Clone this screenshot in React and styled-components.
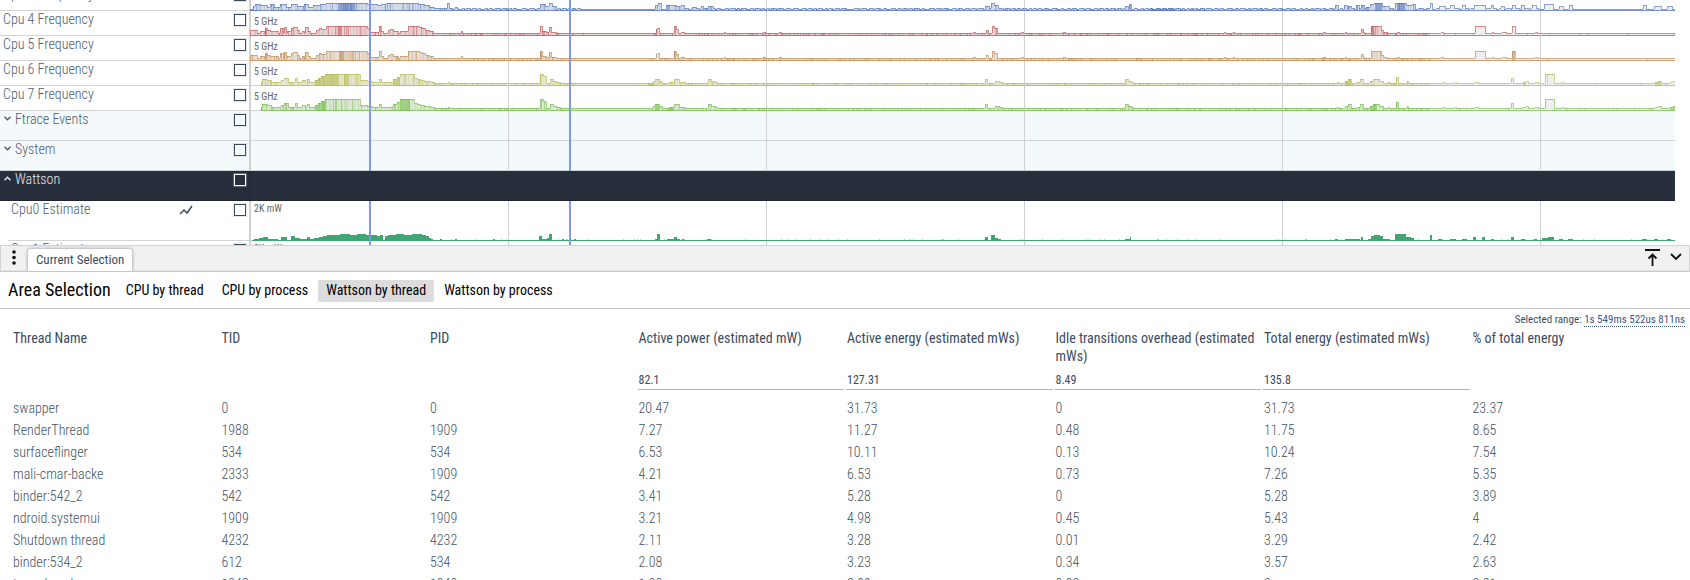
import React from 'react';
import styled, { createGlobalStyle } from 'styled-components';

const GlobalStyle = createGlobalStyle`
  * { box-sizing: border-box; }
  html, body, #root { height: 100%; }
  body {
    margin: 0;
    background: #fff;
    color: #3c4b5d;
    font-family: "Roboto Condensed", Roboto, sans-serif;
    font-size: 14px;
    overflow: hidden;
  }
`;

const SPAN = 1425;
const GRID = [0, 258, 516, 774, 1032, 1290];
const SELECTION = [119, 319];

/* Every step is [start, end, height]; outside the steps the trace rests on its base. */
const BIG_CORE = [
  [0, 7, 6], [10, 14, 5], [15, 17, 10], [17, 20, 6], [20, 28, 5], [30, 33, 8], [34, 36, 9], [37, 41, 5],
  [41, 43, 8], [43, 47, 9], [47, 49, 6], [52, 54, 5], [55, 58, 9], [58, 60, 5], [66, 69, 6], [69, 71, 8],
  [71, 76, 7], [76, 117, 10], [117, 119, 8], [119, 129, 4], [129, 131, 10], [131, 133, 5], [138, 140, 6],
  [140, 143, 7], [143, 148, 5], [150, 158, 5], [158, 169, 10], [169, 172, 9], [172, 175, 8], [175, 179, 6],
  [179, 183, 5], [211, 212, 5], [290, 292, 10], [292, 296, 5], [296, 299, 4], [299, 301, 9], [301, 306, 4],
  [406, 407, 7], [407, 409, 8], [424, 426, 10], [426, 428, 7], [431, 434, 4], [474, 475, 4], [513, 515, 4],
  [529, 531, 4], [723, 725, 4], [736, 738, 6], [742, 744, 10], [744, 747, 8], [771, 773, 4], [813, 815, 4],
  [974, 975, 4], [983, 984, 4], [1073, 1075, 4], [1095, 1096, 4], [1112, 1114, 4], [1111, 1113, 7],
  [1121, 1131, 10], [1131, 1133, 6], [1133, 1137, 4], [1147, 1149, 4], [1191, 1193, 4], [1225, 1235, 10],
  [1242, 1243, 4], [1252, 1256, 4], [1262, 1265, 10], [1285, 1287, 4],
];

const PRIME_CORE = [
  [11, 12, 4], [12, 17, 7], [17, 21, 6], [21, 31, 4], [31, 34, 6], [34, 38, 8], [38, 45, 4], [45, 47, 8],
  [47, 52, 4], [52, 55, 6], [55, 57, 5], [57, 59, 7], [59, 65, 4], [65, 68, 6], [68, 71, 8], [71, 75, 10],
  [75, 110, 12], [110, 117, 6], [117, 122, 5], [122, 129, 4], [129, 131, 7], [131, 143, 4], [143, 147, 7],
  [147, 150, 9], [150, 164, 12], [164, 167, 8], [167, 170, 7], [170, 174, 6], [174, 180, 5], [180, 184, 4],
  [198, 199, 4], [290, 293, 12], [293, 296, 10], [300, 303, 7], [303, 306, 5], [306, 310, 4], [403, 405, 5],
  [405, 409, 7], [410, 412, 5], [419, 424, 4], [424, 429, 7], [430, 435, 4], [458, 461, 7], [461, 465, 5],
  [465, 467, 4], [735, 737, 7], [745, 749, 5], [749, 752, 4], [875, 878, 7], [878, 881, 5], [881, 883, 4],
  [1087, 1088, 4], [1095, 1098, 5], [1098, 1101, 7], [1107, 1110, 4], [1110, 1113, 7], [1120, 1123, 5],
  [1123, 1129, 7], [1129, 1133, 5], [1138, 1139, 4], [1146, 1148, 9], [1157, 1158, 5], [1193, 1194, 4],
  [1205, 1206, 4], [1225, 1228, 4], [1261, 1263, 8], [1273, 1276, 4], [1276, 1278, 5], [1285, 1288, 4],
  [1295, 1304, 12], [1312, 1313, 4], [1405, 1408, 4], [1408, 1411, 5], [1420, 1423, 4], [1423, 1425, 5],
];

const LITTLE_CORE = [
  [3, 5, 5], [5, 10, 7], [10, 17, 6], [17, 20, 4], [20, 24, 7], [24, 30, 4], [30, 36, 7], [36, 41, 4],
  [41, 47, 7], [47, 54, 5], [54, 58, 7], [58, 63, 4], [63, 70, 6], [70, 76, 7], [76, 117, 8], [117, 127, 7],
  [127, 131, 6], [131, 136, 7], [136, 168, 8], [168, 174, 7], [174, 179, 6], [179, 184, 4], [184, 190, 3],
  [197, 199, 8], [205, 207, 4], [290, 295, 7], [295, 299, 5], [299, 302, 8], [302, 306, 5], [405, 408, 6],
  [408, 411, 8], [416, 426, 6], [426, 431, 5], [431, 434, 6], [442, 446, 4], [451, 453, 5], [458, 463, 5],
  [735, 739, 5], [741, 744, 8], [744, 748, 6], [875, 878, 5], [879, 881, 7], [1085, 1088, 6],
  [1094, 1097, 6], [1098, 1101, 5], [1106, 1109, 6], [1111, 1114, 6], [1116, 1120, 4], [1120, 1124, 7],
  [1124, 1132, 8], [1132, 1139, 5], [1145, 1156, 8], [1156, 1162, 6], [1162, 1165, 7], [1180, 1182, 8],
  [1189, 1195, 5], [1200, 1204, 6], [1212, 1215, 6], [1224, 1235, 6], [1241, 1243, 6], [1251, 1254, 5],
  [1262, 1265, 6], [1271, 1274, 6], [1282, 1286, 6], [1294, 1303, 7], [1309, 1313, 5], [1319, 1322, 6],
  [1393, 1396, 6], [1404, 1411, 5], [1417, 1422, 5],
];

const POWER = [
  [4, 9, 2], [9, 13, 3], [13, 18, 4], [18, 24, 2], [24, 28, 2], [31, 37, 4], [41, 45, 5], [45, 50, 3],
  [50, 57, 2], [57, 60, 4], [60, 64, 2], [64, 69, 3], [69, 73, 4], [73, 77, 5], [77, 90, 6], [90, 100, 7],
  [100, 107, 6], [107, 116, 7], [116, 127, 6], [127, 130, 5], [130, 133, 6], [135, 138, 5], [138, 146, 6],
  [146, 154, 7], [154, 162, 6], [162, 172, 7], [172, 176, 6], [176, 179, 5], [179, 181, 3], [181, 183, 2],
  [190, 192, 2], [205, 207, 2], [243, 245, 2], [289, 292, 5], [292, 297, 2], [297, 299, 3], [299, 302, 7],
  [312, 314, 2], [324, 326, 2], [405, 407, 2], [407, 410, 7], [417, 430, 2], [424, 427, 4], [432, 434, 2],
  [457, 461, 2], [735, 738, 4], [741, 745, 6], [745, 748, 3], [748, 751, 2], [875, 881, 2], [880, 881, 4],
  [1085, 1088, 2], [1095, 1110, 2], [1111, 1113, 4], [1118, 1121, 2], [1121, 1124, 5], [1124, 1130, 6],
  [1130, 1133, 5], [1133, 1140, 2], [1145, 1156, 7], [1156, 1161, 4], [1161, 1164, 3], [1180, 1182, 6],
  [1188, 1192, 2], [1200, 1206, 2], [1212, 1217, 2], [1223, 1226, 4], [1232, 1235, 4], [1241, 1244, 2],
  [1261, 1264, 4], [1271, 1275, 2], [1284, 1287, 2], [1292, 1298, 3], [1298, 1304, 4], [1309, 1313, 2],
  [1318, 1323, 2], [1392, 1397, 2], [1404, 1408, 2], [1417, 1421, 2],
];

function heights(steps, base, from = 0) {
  const out = new Array(SPAN).fill(base);
  out.fill(0, 0, from);
  steps.forEach(([a, b, h]) => out.fill(h, a, b));
  return out;
}

function random(seed) {
  let s = seed;
  return () => {
    s = (s * 1664525 + 1013904223) % 4294967296;
    return s / 4294967296;
  };
}

function outline(hs, bottom) {
  let d = '';
  let prev = 0;
  hs.forEach((h, x) => {
    if (h !== prev) {
      const top = bottom - Math.max(h, prev);
      d += `M${x} ${top}h1v${Math.abs(h - prev)}h-1z`;
    }
    if (h) d += `M${x} ${bottom - h}h1v1h-1z`;
    prev = h;
  });
  return d;
}

function area(hs, bottom, test = () => true) {
  return hs.map((h, x) => (h && test(x, h) ? `M${x} ${bottom - h}h1v${h}h-1z` : '')).join('');
}

const Drawing = styled.svg`
  display: block;
  width: 100%;
  height: ${(p) => p.$height}px;
`;

function Frequency({ steps, color, base = 3, from, seed, dense = [], busy }) {
  const next = random(seed);
  const hs = heights(steps, base, from);
  if (busy) {
    for (let x = 190; x < 1290; x += 1) {
      if (hs[x] === base && (x < 330 || x > 430) && next() > 0.4) {
        const len = 2 + Math.floor(next() * 4);
        for (let i = x; i < x + len; i += 1) if (hs[i] === base) hs[i] = base + 1;
        x += len + 1;
      }
    }
  }
  const noise = hs.map(() => next());
  const quiet = (x) => (x > 325 && x < 400) || x > 1180;
  const light = (x) => !quiet(x) && noise[x] > 0.5;
  const strong = (x) => (quiet(x) ? noise[x] > 0.98 : noise[x] > 0.85);
  const inDense = (x) => dense.some(([a, b]) => x >= a && x < b);
  return (
    <g fill={color}>
      <path d={area(hs, 25)} fill="#eeeeee" />
      <path d={area(hs, 25, (x) => x < 1180)} opacity="0.15" />
      <path d={area(hs, 25, light)} opacity="0.15" />
      <path d={area(hs, 25, strong)} opacity="0.35" />
      <path d={area(hs, 25, inDense)} opacity="0.5" />
      <path d={outline(hs, 25)} opacity="0.6" />
      <path d={`M${from || 0} 24H${SPAN}v1H${from || 0}z`} opacity="0.7" />
    </g>
  );
}

function Power() {
  const next = random(7);
  const hs = heights(POWER, 1, 2);
  const speckle = hs.map((h) => (h === 1 && next() > 0.93 ? 2 : 0));
  return (
    <g fill="#3fa673">
      <path d={area(hs, 40)} />
      <path d={area(speckle, 40)} opacity="0.45" />
    </g>
  );
}

function Timeline({ height, children }) {
  return (
    <Drawing $height={height} viewBox={`0 0 ${SPAN} ${height}`} preserveAspectRatio="none" aria-hidden="true">
      {GRID.map((x) => <rect key={x} x={x} width="1" height={height} fill="#d0d0d0" />)}
      {children}
      {SELECTION.map((x) => <rect key={x} x={x} width="2" height={height} fill="#8398e6" />)}
    </Drawing>
  );
}

const Page = styled.div`
  display: flex;
  flex-direction: column;
  height: 100%;
`;

const Viewer = styled.main`
  flex: 0 0 245px;
  overflow: hidden;
  padding-right: 15px;
`;

const Tracks = styled.div`
  display: flex;
  flex-direction: column;
  margin-top: -14px;
`;

const TrackRow = styled.section`
  display: flex;
  flex: none;
  height: ${(p) => p.$height}px;
  background: ${(p) => ({ group: '#f4f9fc', open: '#272e3c' }[p.$kind] || '#fff')};
  color: ${(p) => (p.$kind === 'open' ? '#e8eaed' : '#4b5a6c')};
  --line: ${(p) => ({ group: '#cdd4d5', open: '#20242f' }[p.$kind] || '#d4d4d4')};
`;

const TrackHead = styled.div`
  display: flex;
  flex: 0 0 ${(p) => (p.$nested ? 242 : 250)}px;
  margin-left: ${(p) => (p.$nested ? 8 : 0)}px;
  padding: 0 3px;
  border-right: 1px solid var(--line);
  box-shadow: inset 0 -1px var(--line);
`;

const TrackTitle = styled.label`
  flex: 1;
  font-weight: 300;
  line-height: 16px;
`;

const Toggle = styled.button`
  display: flex;
  width: 12px;
  height: 16px;
  padding: 5px 0 0 1px;
  border: 0;
  background: none;
  color: inherit;
`;

const PlotButton = styled(Toggle)`
  width: 16px;
  margin-right: 39px;
  padding: 4px 0 0;
  color: #3c4b5d;
`;

const Check = styled.input`
  appearance: none;
  width: 12px;
  height: 12px;
  margin: 3px 0 0;
  border: 1px solid ${(p) => (p.$light ? '#fff' : '#3c4b5d')};
  box-shadow: 0 0 0 1px ${(p) => (p.$light ? '#ffffff44' : '#3c4b5d22')};
`;

const TrackBody = styled.div`
  position: relative;
  flex: 1;
  box-shadow: inset 0 -1px var(--line);
`;

const Scale = styled.span`
  position: absolute;
  top: ${(p) => (p.$tall ? 1 : 4)}px;
  left: 3px;
  padding: 0 1px;
  background: #ffffffcc;
  color: #666;
  font-size: 10px;
  line-height: 13px;
`;

const Chevron = ({ up }) => (
  <svg width="7" height="5" viewBox="0 0 7 5" fill="none" stroke="currentColor" strokeWidth="1.4" aria-hidden="true">
    <path d={up ? 'M.5 4.2 3.5 1.2 6.5 4.2' : 'M.5 .8 3.5 3.8 6.5 .8'} />
  </svg>
);

function Track({ name, height = 25, kind, nested, scale, children }) {
  const id = name.replace(/\s/g, '-');
  const group = kind === 'group' || kind === 'open';
  return (
    <TrackRow $height={height} $kind={kind}>
      <TrackHead $nested={nested}>
        {group && <Toggle aria-label={`Toggle ${name}`}><Chevron up={kind === 'open'} /></Toggle>}
        <TrackTitle htmlFor={id}>{name}</TrackTitle>
        {nested && (
          <PlotButton aria-label="Chart options">
            <svg width="14" height="10" viewBox="0 0 14 10" fill="none" stroke="currentColor" strokeWidth="1.5" aria-hidden="true">
              <path d="M1 9 5 5l3 3 5-7" />
            </svg>
          </PlotButton>
        )}
        <Check id={id} type="checkbox" $light={kind === 'open'} />
      </TrackHead>
      <TrackBody>
        {kind !== 'open' && <Timeline height={height}>{children}</Timeline>}
        {scale && <Scale $tall={nested}>{scale}</Scale>}
      </TrackBody>
    </TrackRow>
  );
}

const Drawer = styled.section`
  flex: 1;
  min-height: 0;
  overflow: hidden;
  background: #fff;
`;

const TabBar = styled.header`
  display: flex;
  align-items: flex-end;
  height: 27px;
  padding: 0 1px 0 9px;
  border: 1px solid #d2d2d2;
  border-bottom-color: #c8c8c8;
  background: #f1f1f1;
  box-shadow: inset 0 -1px #e4e4e4;
`;

const IconButton = styled.button`
  display: flex;
  align-items: center;
  justify-content: center;
  width: ${(p) => p.$width || 24}px;
  height: 25px;
  padding: ${(p) => p.$lift || 0}px 0;
  padding-top: 0;
  border: 0;
  background: none;
  color: #111;
`;

const Tab = styled.button`
  height: 22px;
  margin: 0 auto 0 10px;
  padding: 0 8px 2px;
  border: 0;
  border-radius: 3px 3px 0 0;
  background: #fff;
  box-shadow: 0 0 3px 1px #00000040;
  clip-path: inset(-4px -4px 0 -4px);
  color: #3c4b5d;
  font: inherit;
  font-size: 13px;
`;

const Heading = styled.div`
  display: flex;
  align-items: center;
  gap: 2px;
  height: 37px;
  padding: 2px 8px 0;
  border-bottom: 1px solid #cacaca;
  color: #000;
`;

const Title = styled.h1`
  margin: 0 5px 0 0;
  padding-bottom: 2px;
  font-size: 18px;
  font-weight: 400;
  line-height: 20px;
`;

const Choice = styled.button`
  height: 22px;
  padding: 0 8px 2px;
  border: 0;
  border-radius: 2px;
  background: ${(p) => (p.$active ? '#dcdcdc' : 'transparent')};
  color: #000;
  font: inherit;
`;

const Range = styled.div`
  height: 14px;
  margin-top: 3px;
  padding-right: 5px;
  font-size: 11px;
  line-height: 16px;
  text-align: right;
  a {
    display: inline-block;
    height: 15px;
    border-bottom: 1px dotted #3d5688;
    color: #3d5688;
    text-decoration: none;
  }
`;

const Table = styled.table`
  width: calc(100% - 20px);
  margin: 0 10px;
  border-spacing: 2px;
  table-layout: fixed;
  line-height: 18px;
  th, td {
    padding: 1px;
    text-align: left;
    vertical-align: top;
  }
  th { font-weight: 400; }
  td { font-weight: 300; color: #435264; }
`;

const Sum = styled.td`
  && {
    height: 22px;
    padding: 3px 1px 0;
    border-bottom: ${(p) => (p.$value ? '1px solid #b0b3bb' : '0')};
    color: #3c4b5d;
    font-size: 12px;
    font-weight: 400;
  }
`;

const Spacer = styled.tr`
  height: 4px;
`;

const COLUMNS = [
  'Thread Name', 'TID', 'PID', 'Active power (estimated mW)', 'Active energy (estimated mWs)',
  'Idle transitions overhead (estimated mWs)', 'Total energy (estimated mWs)', '% of total energy',
];
const SUMS = ['', '', '', '82.1', '127.31', '8.49', '135.8', ''];
const ROWS = [
  ['swapper', '0', '0', '20.47', '31.73', '0', '31.73', '23.37'],
  ['RenderThread', '1988', '1909', '7.27', '11.27', '0.48', '11.75', '8.65'],
  ['surfaceflinger', '534', '534', '6.53', '10.11', '0.13', '10.24', '7.54'],
  ['mali-cmar-backe', '2333', '1909', '4.21', '6.53', '0.73', '7.26', '5.35'],
  ['binder:542_2', '542', '542', '3.41', '5.28', '0', '5.28', '3.89'],
  ['ndroid.systemui', '1909', '1909', '3.21', '4.98', '0.45', '5.43', '4'],
  ['Shutdown thread', '4232', '4232', '2.11', '3.28', '0.01', '3.29', '2.42'],
  ['binder:534_2', '612', '534', '2.08', '3.23', '0.34', '3.57', '2.63'],
  ['traced_probes', '1048', '1048', '1.93', '2.99', '0.02', '3', '2.21'],
];

export default function App() {
  return (
    <Page>
      <GlobalStyle />
      <Viewer>
        <Tracks>
          <Track name="Cpu 3 Frequency">
            <Frequency steps={LITTLE_CORE} color="#4a69bd" base={2} seed={3} busy dense={[[88, 105], [1125, 1132], [1147, 1155], [900, 925]]} />
          </Track>
          <Track name="Cpu 4 Frequency" scale="5 GHz">
            <Frequency steps={BIG_CORE} color="#c0484c" seed={11} dense={[[15, 17], [88, 92], [1121, 1124]]} />
          </Track>
          <Track name="Cpu 5 Frequency" scale="5 GHz">
            <Frequency steps={BIG_CORE} color="#bf8243" seed={25} dense={[[15, 17], [89, 94], [290, 292], [1262, 1265]]} />
          </Track>
          <Track name="Cpu 6 Frequency" scale="5 GHz">
            <Frequency steps={PRIME_CORE} color="#b2b83c" seed={31} from={11} dense={[[65, 88], [94, 98], [143, 150], [398, 404], [1095, 1101], [1273, 1276], [1405, 1411]]} />
          </Track>
          <Track name="Cpu 7 Frequency" scale="5 GHz">
            <Frequency steps={PRIME_CORE} color="#6dbb3f" seed={47} from={11} dense={[[65, 76], [150, 160], [405, 409], [418, 424], [1120, 1127], [1420, 1425]]} />
          </Track>
          <Track name="Ftrace Events" height={30} kind="group" />
          <Track name="System" height={30} kind="group" />
          <Track name="Wattson" height={30} kind="open" />
          <Track name="Cpu0 Estimate" height={40} nested scale="2K mW"><Power /></Track>
          <Track name="Cpu1 Estimate" height={40} nested scale="2K mW"><Power /></Track>
        </Tracks>
      </Viewer>
      <Drawer>
        <TabBar>
          <IconButton $width={8} $lift={3} aria-label="More">
            <svg width="4" height="15" viewBox="0 0 4 15" fill="currentColor" aria-hidden="true">
              <circle cx="2" cy="2" r="1.8" /><circle cx="2" cy="7.5" r="1.8" /><circle cx="2" cy="13" r="1.8" />
            </svg>
          </IconButton>
          <Tab>Current Selection</Tab>
          <IconButton $lift={2} aria-label="Maximise">
            <svg width="15" height="17" viewBox="0 0 15 17" fill="none" stroke="currentColor" strokeWidth="1.8" aria-hidden="true">
              <path d="M0 1h15M7.500 17V5.500M3.500 9.500l4-4 4 4" />
            </svg>
          </IconButton>
          <IconButton $lift={4} aria-label="Collapse">
            <svg width="12" height="8" viewBox="0 0 12 8" fill="none" stroke="currentColor" strokeWidth="1.9" aria-hidden="true">
              <path d="M1 1l5 5 5-5" />
            </svg>
          </IconButton>
        </TabBar>
        <Heading>
          <Title>Area Selection</Title>
          <Choice>CPU by thread</Choice>
          <Choice>CPU by process</Choice>
          <Choice $active>Wattson by thread</Choice>
          <Choice>Wattson by process</Choice>
        </Heading>
        <Range>Selected range: <a href="#range">1s 549ms 522us 811ns</a></Range>
        <Table>
          <thead>
            <tr>{COLUMNS.map((c) => <th key={c} scope="col">{c}</th>)}</tr>
            <tr>{SUMS.map((s, i) => <Sum key={COLUMNS[i]} $value={s}>{s}</Sum>)}</tr>
          </thead>
          <tbody>
            <Spacer />
            {ROWS.map((r) => (
              <tr key={r[0]}>{r.map((v, i) => <td key={COLUMNS[i]}>{v}</td>)}</tr>
            ))}
          </tbody>
        </Table>
      </Drawer>
    </Page>
  );
}
